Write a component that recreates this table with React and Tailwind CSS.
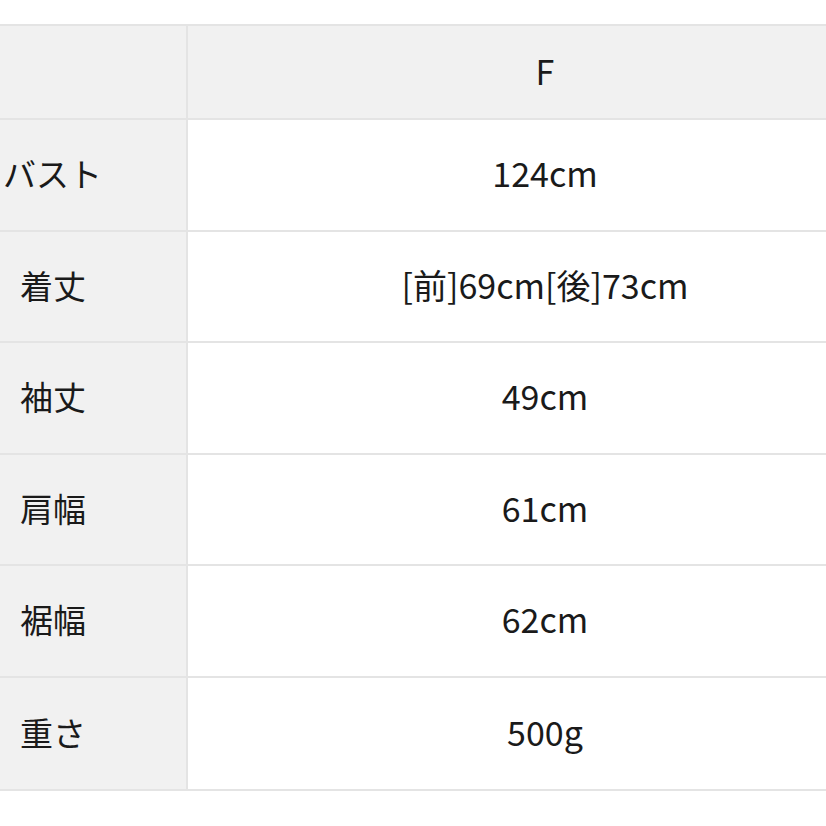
import React from "react";

const rows = [
  { label: "バスト", value: "124cm", pad: "pl-[3px]" },
  { label: "着丈", value: "[前]69cm[後]73cm", pad: "pl-[20px]" },
  { label: "袖丈", value: "49cm", pad: "pl-[20px]" },
  { label: "肩幅", value: "61cm", pad: "pl-[20px]" },
  { label: "裾幅", value: "62cm", pad: "pl-[20px]" },
  { label: "重さ", value: "500g", pad: "pl-[20px]" },
];

export default function App() {
  return (
    <div
      className="w-[826px] h-[826px] overflow-hidden bg-white pt-[24px] text-[#1a1a1a]"
      style={{ fontFamily: '"Noto Sans CJK JP", "Noto Sans", sans-serif' }}
    >
      <div className="w-[902px] border-t-2 border-b-2 border-[#e4e4e4]">
        <div className="flex h-[94px] border-b-2 border-[#e4e4e4] bg-[#f1f1f1]">
          <div className="w-[188px] border-r-2 border-[#e4e4e4]" />
          <div className="flex-1 flex items-center justify-center pb-[3px] text-[34px]">F</div>
        </div>
        {rows.map((row, i) => (
          <div
            key={i}
            className={`flex h-[111.5px] ${i < rows.length - 1 ? "border-b-2 border-[#e4e4e4]" : ""}`}
          >
            <div
              className={`w-[188px] bg-[#f1f1f1] border-r-2 border-[#e4e4e4] flex items-center pb-[2px] text-[33px] ${row.pad}`}
            >
              {row.label}
            </div>
            <div className="flex-1 flex items-center justify-center pb-[4px] text-[34px]">
              {row.value}
            </div>
          </div>
        ))}
      </div>
    </div>
  );
}
